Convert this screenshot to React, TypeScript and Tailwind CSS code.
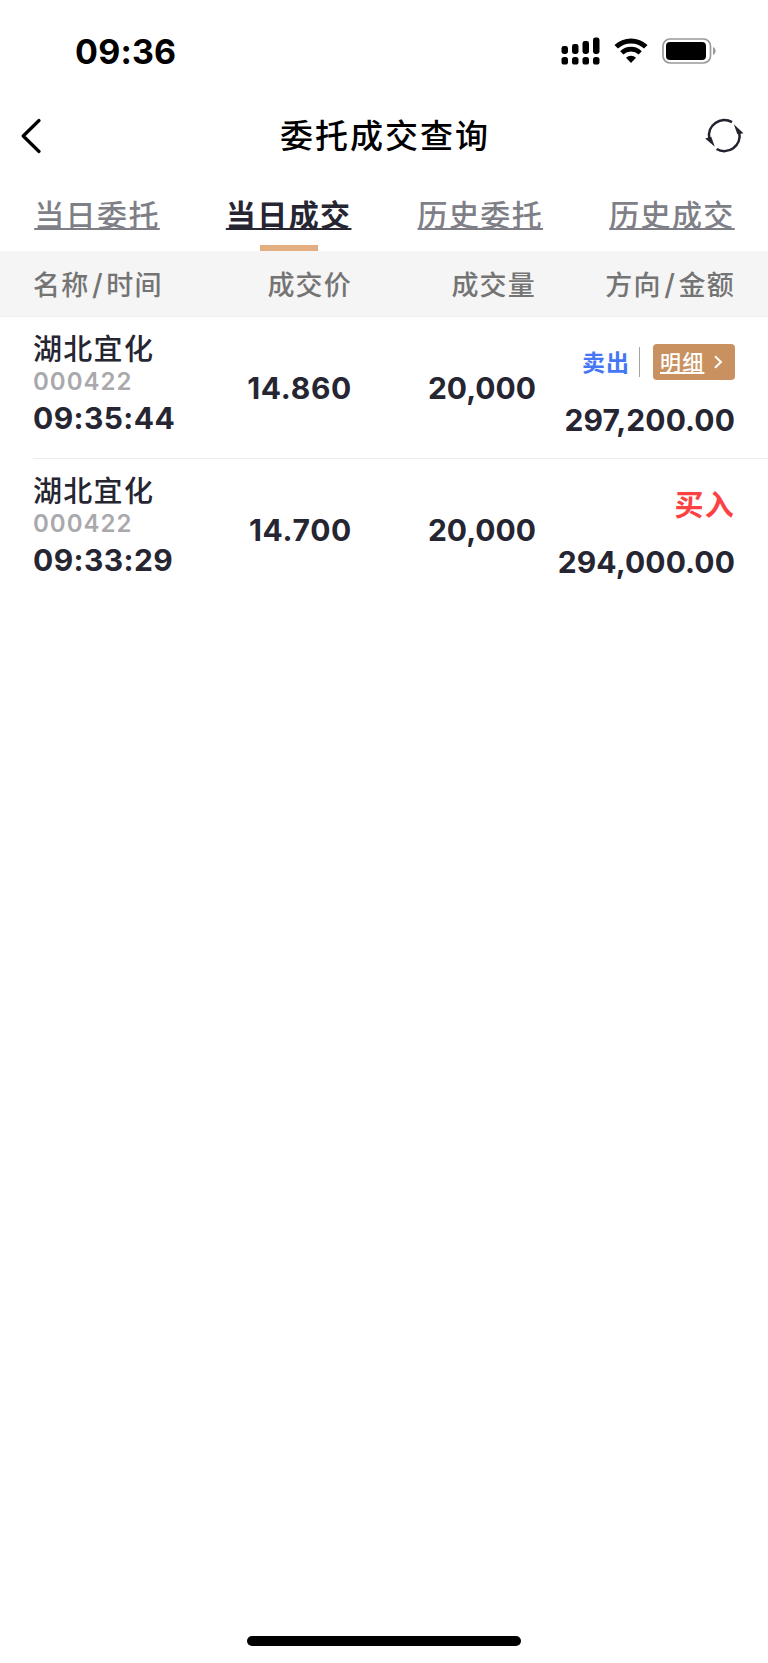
import { clsx } from 'clsx';

type Trade = {
  name: string;
  code: string;
  time: string;
  price: string;
  volume: string;
  side: 'buy' | 'sell';
  amount: string;
};

const tabs = ['当日委托', '当日成交', '历史委托', '历史成交'];

const trades: Trade[] = [
  { name: '湖北宜化', code: '000422', time: '09:35:44', price: '14.860', volume: '20,000', side: 'sell', amount: '297,200.00' },
  { name: '湖北宜化', code: '000422', time: '09:33:29', price: '14.700', volume: '20,000', side: 'buy', amount: '294,000.00' },
];

function StatusBar() {
  return (
    <div className="flex h-[102px] items-center justify-between pr-[51px] pl-[75px]">
      <span className="pt-px text-[34px] leading-[40px] font-bold tracking-[0.2px] text-black">09:36</span>
      <div className="flex items-center">
        {/* Dual SIM signal */}
        <svg width="39" height="28" viewBox="0 0 39 28" fill="#000">
          <rect x="0.5" y="9" width="6.5" height="8" rx="2.4" />
          <rect x="11" y="7" width="6.5" height="10" rx="2.4" />
          <rect x="21.5" y="4" width="6.5" height="13" rx="2.4" />
          <rect x="32" y="0.5" width="6.5" height="16.5" rx="2.4" />
          <rect x="0.5" y="20" width="6.5" height="7.5" rx="2.6" />
          <rect x="11" y="20" width="6.5" height="7.5" rx="2.6" />
          <rect x="21.5" y="20" width="6.5" height="7.5" rx="2.6" />
          <rect x="32" y="20" width="6.5" height="7.5" rx="2.6" />
        </svg>
        <svg className="ml-[14px]" width="34" height="26" viewBox="0 0 34 26" fill="none">
          <path d="M2.2 8.8 A21.5 21.5 0 0 1 31.8 8.8" stroke="#000" strokeWidth="5" />
          <path d="M7.8 14.8 A13.3 13.3 0 0 1 26.2 14.8" stroke="#000" strokeWidth="4.6" />
          <path d="M17 25 L12 19.8 A7.2 7.2 0 0 1 22 19.8 Z" fill="#000" />
        </svg>
        <svg className="ml-[14px]" width="55" height="26" viewBox="0 0 55 26">
          <rect x="1" y="1" width="47.5" height="24" rx="7" fill="none" stroke="#999" strokeWidth="1.7" />
          <rect x="4" y="4" width="40" height="18" rx="4" fill="#000" />
          <path d="M51 9 C54.5 10.5 54.5 15.5 51 17 Z" fill="#999" />
        </svg>
      </div>
    </div>
  );
}

function NavBar() {
  return (
    <div className="flex h-[68px] items-center justify-between pr-[24px] pl-[21px]">
      <svg width="40" height="36" viewBox="0 0 40 36" fill="none" stroke="#000" strokeWidth="3.2" strokeLinecap="round" strokeLinejoin="round">
        <path d="M18 2.5 L2.2 18 L18 33.5" />
      </svg>
      <h1 className="pl-[5px] text-[33px] leading-[40px] font-medium tracking-[2px] text-black">委托成交查询</h1>
      <svg width="40" height="36" viewBox="0 0 40 36" fill="none">
        <path d="M28 4.2 A15.3 15.3 0 0 0 5.3 20.5" stroke="#23222f" strokeWidth="2.6" />
        <path d="M12.6 31 A15.3 15.3 0 0 0 35.3 14.7" stroke="#23222f" strokeWidth="2.6" />
        <path d="M29.8 6.3 L39.5 15.2 L33.4 16.2 Z" fill="#23222f" />
        <path d="M1.2 20.4 L7.2 18.8 L10.8 28.8 Z" fill="#23222f" />
      </svg>
    </div>
  );
}

function Tabs() {
  return (
    <div className="flex h-[81px] justify-between pr-[33px] pl-[34px]">
      {tabs.map((tab, i) => (
        <div key={tab} className="flex w-[126px] flex-col items-center justify-between pt-[23px]">
          <span
            className={clsx(
              'text-[30px] leading-[44px] tracking-[1.4px] whitespace-nowrap underline decoration-2 underline-offset-[2px] [text-decoration-skip-ink:none]',
              i === 1 ? 'font-bold text-[#262532]' : 'font-medium text-[#7f7f87]',
            )}
          >
            {tab}
          </span>
          {i === 1 && <span className="h-[6px] w-[58px] bg-[#e3ae80]" />}
        </div>
      ))}
    </div>
  );
}

function Slash() {
  return <span className="mx-[2.5px] text-[29px] leading-[36px]">/</span>;
}

function TableHead() {
  return (
    <div className="flex h-[66px] items-baseline border-b border-[#ededed] bg-[#f5f5f5] px-[33px] pt-[15px] text-[27px] leading-[40px] font-medium tracking-[1.2px] text-[#747474]">
      <span className="w-[150px] whitespace-nowrap">
        名称
        <Slash />
        时间
      </span>
      <span className="w-[169px] text-right">成交价</span>
      <span className="w-[184px] text-right">成交量</span>
      <span className="flex-1 text-right">
        方向
        <Slash />
        金额
      </span>
    </div>
  );
}

function TradeRow({ trade, last }: { trade: Trade; last: boolean }) {
  return (
    <div className={clsx('ml-[33px] flex h-[142px] pr-[33px] text-[#262532]', !last && 'border-b border-[#ececee]')}>
      <div className="flex w-[150px] flex-col pt-[14px]">
        <span className="text-[29px] leading-[37px] font-medium tracking-[1.3px]">{trade.name}</span>
        <span className="text-[24px] leading-[28px] font-semibold tracking-[1px] text-[#a9a9ad]">{trade.code}</span>
        <span className="text-[30px] leading-[45px] font-bold tracking-[0.4px]">{trade.time}</span>
      </div>
      <span className="w-[169px] pt-[51px] text-right text-[30px] leading-[40px] font-bold tracking-[0.7px]">{trade.price}</span>
      <span className="w-[184px] pt-[51px] text-right text-[30px] leading-[40px] font-bold">{trade.volume}</span>
      <div className="flex flex-1 flex-col items-end pt-[27px]">
        {trade.side === 'sell' ? (
          <div className="flex h-[36px] items-center">
            <span className="pt-[2px] text-[23px] leading-[36px] font-bold tracking-[1px] text-[#4577f5]">卖出</span>
            <span className="ml-[9px] h-[30px] w-px bg-[#a5a5a5]" />
            <button className="ml-[13px] flex h-[36px] w-[82px] items-center rounded-[4px] bg-[#c8915f] pl-[7px] text-white">
              <span className="pt-px text-[21px] leading-[36px] font-medium tracking-[1.2px] underline decoration-2 underline-offset-[2px] [text-decoration-skip-ink:none]">
                明细
              </span>
              <svg className="ml-[9px]" width="10" height="14" viewBox="0 0 10 14" fill="none" stroke="#fff" strokeWidth="2">
                <path d="M2 1.2 L8 7 L2 12.8" />
              </svg>
            </button>
          </div>
        ) : (
          <span className="h-[36px] pt-[2px] text-[29px] leading-[36px] font-bold tracking-[1.2px] text-[#fb4142]">买入</span>
        )}
        <span className="mt-[20px] text-[30px] leading-[40px] font-bold tracking-[0.1px]">{trade.amount}</span>
      </div>
    </div>
  );
}

export default function App() {
  return (
    <div className="flex h-[1663px] w-[768px] flex-col bg-white font-['Inter','Noto_Sans_CJK_SC',sans-serif]">
      <StatusBar />
      <NavBar />
      <Tabs />
      <TableHead />
      <div className="flex flex-1 flex-col">
        {trades.map((trade, i) => (
          <TradeRow key={trade.time} trade={trade} last={i === trades.length - 1} />
        ))}
      </div>
      <div className="flex justify-center pb-[17px]">
        <div className="h-[10px] w-[274px] rounded-full bg-black" />
      </div>
    </div>
  );
}
